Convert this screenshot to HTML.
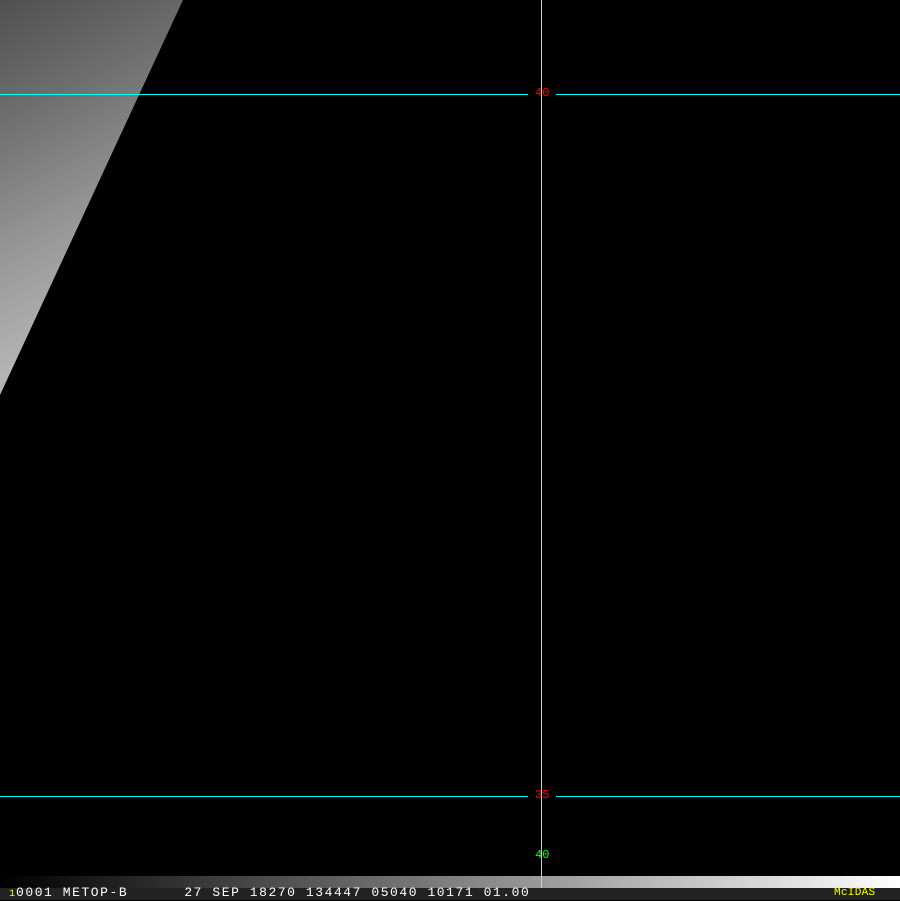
<!DOCTYPE html>
<html><head><style>
body{margin:0;width:900px;height:900px;background:#000;position:relative;overflow:hidden;font-family:"Liberation Mono",monospace}
div{position:absolute}
.t{font-size:12px;line-height:12px}
</style></head><body>
<svg width="900" height="900" style="position:absolute;left:0;top:0">
<defs><linearGradient id="g" gradientUnits="userSpaceOnUse" x1="0" y1="0" x2="150" y2="300">
<stop offset="0" stop-color="#505050"/><stop offset="0.3" stop-color="#6c6c6c"/><stop offset="0.7" stop-color="#989898"/><stop offset="1" stop-color="#b4b4b4"/></linearGradient>
<linearGradient id="b" x1="0" x2="1"><stop offset="0" stop-color="#000"/><stop offset="1" stop-color="#fff"/></linearGradient></defs>
<polygon points="0,0 183,0 0,395" fill="url(#g)"/>
<line x1="0" y1="94.5" x2="528" y2="94.5" stroke="#0ff"/>
<line x1="556" y1="94.5" x2="900" y2="94.5" stroke="#0ff"/>
<line x1="0" y1="796.5" x2="528" y2="796.5" stroke="#0ff"/>
<line x1="556" y1="796.5" x2="900" y2="796.5" stroke="#0ff"/>
<rect x="0" y="876" width="900" height="12" fill="url(#b)"/>
<line x1="541.5" y1="0" x2="541.5" y2="888" stroke="#ccc"/>
<rect x="0" y="888" width="900" height="12" fill="#222"/>
</svg>
<div class="t" style="left:535px;top:87px;color:#f00">40</div>
<div class="t" style="left:535px;top:789px;color:#f00">35</div>
<div class="t" style="left:535px;top:849px;color:#0f0">40</div>
<div class="t" style="left:9px;top:889px;color:#ff0;font-size:10px">1</div>
<div class="t" style="left:16px;top:887px;color:#fff;white-space:pre;font-size:13px;letter-spacing:1.55px">0001 METOP-B      27 SEP 18270 134447 05040 10171 01.00</div>
<div class="t" style="left:834px;top:887px;color:#ff0;font-size:11px;letter-spacing:0.3px">McIDAS</div>
</body></html>
